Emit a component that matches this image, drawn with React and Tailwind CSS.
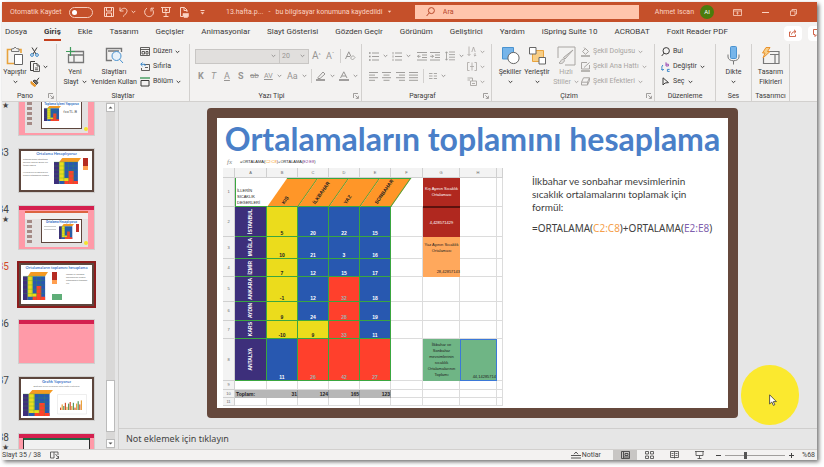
import React from "react";

const ui = "font-['Roboto','Noto_Sans',sans-serif]";

function Svg({ w, h, className = "", children }) {
  return (
    <svg
      width={w}
      height={h}
      viewBox={`0 0 ${w} ${h}`}
      fill="none"
      stroke="currentColor"
      strokeWidth="1"
      aria-hidden="true"
      className={`shrink-0 ${className}`}
    >
      {children}
    </svg>
  );
}

function Chevron({ className = "" }) {
  return (
    <Svg w={5} h={4} className={className}>
      <path d="M0.7 0.9 2.5 2.7 4.3 0.9" />
    </Svg>
  );
}

function Launcher() {
  return (
    <Svg w={6} h={6} className="text-[#8a8886]">
      <path d="M0.5 5V0.5H5M2.3 2.3 5.2 5.2M5.4 2.8V5.4H2.8" strokeWidth="0.8" />
    </Svg>
  );
}

/* ---------- title bar ---------- */

function TitleIcon({ label, className = "", children }) {
  return (
    <button type="button" aria-label={label} className={`flex shrink-0 items-center justify-center ${className}`}>
      {children}
    </button>
  );
}

function TitleBar() {
  return (
    <header className="flex h-5 shrink-0 items-center bg-[#c5502a] text-[7px] leading-none text-[#fbd3c3]">
      <label htmlFor="autosave" className="ml-2 w-[59px] shrink-0 whitespace-nowrap">
        Otomatik Kaydet
      </label>
      <span className="relative flex h-[11px] w-6 shrink-0 items-center">
        <input
          id="autosave"
          type="checkbox"
          role="switch"
          className="h-[11px] w-6 appearance-none rounded-full border border-[#f6cdbd]"
        />
        <span className="pointer-events-none absolute left-[3px] h-[5px] w-[5px] rounded-full bg-white" />
      </span>
      <TitleIcon label="Kaydet" className="ml-2 w-4">
        <Svg w={10} h={10}>
          <path d="M0.5 0.5H9.5V9.5H0.5ZM2.5 0.5V4H7.5V0.5M2.5 9.5V6H7.5V9.5" />
        </Svg>
      </TitleIcon>
      <TitleIcon label="Geri Al" className="ml-0.5 w-4 gap-[3px]">
        <Svg w={9} h={10}>
          <path d="M1 0.5V4H4.5M1 4C3 1 6 0.6 7.4 2.2 8.8 4 8 6 4 9.6" />
        </Svg>
        <Chevron />
      </TitleIcon>
      <TitleIcon label="Yinele" className="ml-1.5 w-4">
        <Svg w={10} h={11}>
          <path d="M3 1.2C0.8 2.4 0 5 1.2 7.2 2.6 9.8 6 10.4 8.2 8.4 10 6.6 9.8 3.6 7.6 1.6M7 4.5V1.2H10" />
        </Svg>
      </TitleIcon>
      <TitleIcon label="Baştan Başlat" className="ml-px w-4">
        <Svg w={10} h={10}>
          <path d="M0 0.5H10M1.5 0.5V5.5H8.5V0.5M5 5.5V9.5M2.5 9.5H7.5M4.3 1.8V4.2L6.3 3Z" />
        </Svg>
      </TitleIcon>
      <TitleIcon label="Yazdır" className="ml-0.5 w-4">
        <Svg w={10} h={11}>
          <path d="M4 9.5H1.5V0.5H5.5L8 3V5M5 0.5V3.5H8" />
          <path d="M4 6.5H9.5V9.5H4ZM5 9.5V10.5H8.5V9.5" fill="currentColor" strokeWidth="0.6" />
        </Svg>
      </TitleIcon>
      <TitleIcon label="Araç Çubuğunu Özelleştir" className="ml-1 w-3">
        <Svg w={5} h={5}>
          <path d="M0.5 0.5H4.5" />
          <path d="M0.6 2.2H4.4L2.5 4.4Z" fill="currentColor" stroke="none" />
        </Svg>
      </TitleIcon>
      <span className="ml-[18px] flex shrink-0 items-center whitespace-pre">
        13.hafta.p...&nbsp;&nbsp; - &nbsp;&nbsp;bu bilgisayar konumuna kaydedildi
        <Svg w={5} h={4} className="ml-1">
          <path d="M0.8 0.8H4.2L2.5 2.8Z" fill="currentColor" stroke="none" />
        </Svg>
      </span>
      <div className="ml-auto flex h-3.5 w-56 shrink items-center gap-2 bg-[#ffc5ac] pl-[11px] text-[#b8482a]">
        <Svg w={9} h={10}>
          <circle cx="5.4" cy="3.6" r="3" />
          <path d="M3.3 5.8 0.6 9" />
        </Svg>
        <input
          type="search"
          aria-label="Ara"
          placeholder="Ara"
          className="min-w-0 flex-1 bg-transparent outline-none placeholder:text-[#b8482a]"
        />
      </div>
      <span className="ml-4 shrink-0 whitespace-nowrap">Ahmet Iscan</span>
      <span className="ml-1.5 flex h-3.5 w-3.5 shrink-0 items-center justify-center rounded-full bg-[#4a7c0c] text-[6px] text-white">
        AI
      </span>
      <TitleIcon label="Şerit Görüntüleme" className="ml-[17px] w-3">
        <Svg w={9} h={7}>
          <path d="M0.5 0.5H8.5V6.5H0.5ZM0.5 2H8.5M4.5 5.6V3.2M3.4 4.2 4.5 3.2 5.6 4.2" strokeWidth="0.8" />
        </Svg>
      </TitleIcon>
      <TitleIcon label="Simge Durumuna Küçült" className="ml-4 w-3">
        <Svg w={7} h={3}>
          <path d="M0 1.5H7" />
        </Svg>
      </TitleIcon>
      <TitleIcon label="Önceki Boyut" className="ml-4 mr-[18px] w-3">
        <Svg w={7} h={7}>
          <path d="M0.5 2H5V6.5H0.5ZM2 2V0.5H6.5V5H5" strokeWidth="0.8" />
        </Svg>
      </TitleIcon>
    </header>
  );
}

/* ---------- tabs ---------- */

const tabs = [
  "Dosya",
  "Giriş",
  "Ekle",
  "Tasarım",
  "Geçişler",
  "Animasyonlar",
  "Slayt Gösterisi",
  "Gözden Geçir",
  "Görünüm",
  "Geliştirici",
  "Yardım",
  "iSpring Suite 10",
  "ACROBAT",
  "Foxit Reader PDF",
];

function Tabs() {
  return (
    <nav className="flex h-[22px] shrink-0 items-center overflow-hidden pl-[3px] text-[8px] leading-none text-[#3b3a39]">
      <div className="flex gap-[17px]">
        {tabs.map((t) => (
          <button
            key={t}
            type="button"
            className={
              t === "Giriş"
                ? "border-b-2 border-[#c43e1c] pt-[3px] pb-[3px] font-bold whitespace-nowrap"
                : "border-b-2 border-transparent pt-[3px] pb-[3px] whitespace-nowrap"
            }
          >
            {t}
          </button>
        ))}
      </div>
      <div className="ml-auto flex shrink-0 gap-1.5 text-[#c43e1c]">
        <button type="button" aria-label="Paylaş" className="flex h-[15px] w-[18px] items-center justify-center rounded-sm bg-white">
          <Svg w={8} h={8}>
            <path d="M2 3H0.5V7.5H6.5V5.5M2.5 5.5C2.8 3.5 4 2.6 6.5 2.6M5 0.8 7 2.6 5 4.4" strokeWidth="0.8" />
          </Svg>
        </button>
        <button type="button" aria-label="Açıklamalar" className="flex h-[15px] w-[9px] items-center justify-end overflow-hidden rounded-l-sm bg-white">
          <Svg w={4} h={8}>
            <path d="M4 0.5H0.5V5.5H2V7.5L4 5.5" strokeWidth="0.8" />
          </Svg>
        </button>
      </div>
    </nav>
  );
}

/* ---------- ribbon ---------- */

function Group({ label, launcher, width, children }) {
  return (
    <section aria-label={label} className={`flex shrink-0 flex-col border-r border-[#d2d0ce] ${width}`}>
      <div className="flex h-12 items-start">{children}</div>
      <div className="flex h-[10px] items-center">
        <span className="flex-1 text-center whitespace-nowrap">{label}</span>
        {launcher && (
          <button type="button" aria-label={`${label} ayarları`} className="mr-0.5">
            <Launcher />
          </button>
        )}
      </div>
    </section>
  );
}

function BigButton({ icon, line1, line2, chevron, chevronBelow, className = "", disabled }) {
  return (
    <button
      type="button"
      disabled={disabled}
      className={`flex shrink-0 flex-col items-center whitespace-nowrap leading-[10px] ${disabled ? "text-[#a8a5a2]" : ""} ${className}`}
    >
      <span className="flex h-[23px] items-center">{icon}</span>
      <span>{line1}</span>
      <span className="flex h-[10px] items-center gap-[3px]">
        {line2}
        {(chevron || chevronBelow) && <Chevron />}
      </span>
    </button>
  );
}

function SmallButton({ icon, label, chevron, disabled, aria }) {
  return (
    <button
      type="button"
      disabled={disabled}
      aria-label={aria}
      className={`flex h-[15px] items-center gap-[3px] whitespace-nowrap ${disabled ? "text-[#a8a5a2]" : ""}`}
    >
      {icon}
      {label}
      {chevron && <Chevron />}
    </button>
  );
}

function Tool({ label, width, chevron, children }) {
  return (
    <button
      type="button"
      disabled
      aria-label={label}
      className={`flex h-4 shrink-0 items-center gap-1 text-[#979593] ${width}`}
    >
      {children}
      {chevron && <Chevron />}
    </button>
  );
}

function Lines({ rows }) {
  return (
    <Svg w={9} h={9}>
      {rows.map(([a, b], i) => (
        <path key={i} d={`M${a} ${0.5 + i * 2.6}H${b}`} strokeWidth="0.9" />
      ))}
    </Svg>
  );
}

function Ribbon() {
  return (
    <div className="flex h-[58px] shrink-0 overflow-hidden border-b border-[#d2d0ce] text-[7px] leading-none text-[#3b3a39]">
      <Group label="Pano" launcher width="w-[55px]">
        <BigButton
          className="w-[26px]"
          line1="Yapıştır"
          chevronBelow
          icon={
            <Svg w={18} h={20}>
              <path d="M6 3.5H1.5V17.5H8M12 3.5H15V7" stroke="#e8a33d" strokeWidth="1.6" />
              <path d="M5.5 5.5V3L8 2.5 9 1 10.5 2.5 13 3V5.5Z" fill="#f3f2f1" stroke="#777" />
              <path d="M8.5 8.5H16.5V18.5H8.5Z" fill="#fff" stroke="#666" />
            </Svg>
          }
        />
        <div className="ml-0.5 flex flex-col">
          <SmallButton
            aria="Kes"
            icon={
              <Svg w={9} h={10}>
                <path d="M2 0.5 6 7M7 0.5 3 7" />
                <circle cx="2" cy="8" r="1.4" stroke="#3a87c9" />
                <circle cx="7" cy="8" r="1.4" stroke="#3a87c9" />
              </Svg>
            }
          />
          <SmallButton
            aria="Kopyala"
            chevron
            icon={
              <Svg w={10} h={11}>
                <path d="M3.5 9.5H0.5V0.5H5" />
                <path d="M3.5 2.5H7L9.5 5V10.5H3.5ZM7 2.5V5H9.5M5 7H8M5 8.7H8" strokeWidth="0.8" />
              </Svg>
            }
          />
          <SmallButton
            aria="Biçim Boyacısı"
            icon={
              <Svg w={10} h={10}>
                <path d="M1 4.5 6 8.5 4.5 9.5 1 6.5Z" fill="#f0a030" stroke="#e08a1c" />
                <path d="M3 4 6.5 7.5 8 5.5 5 3ZM6.5 4 9 0.8" fill="#777" />
              </Svg>
            }
          />
        </div>
      </Group>

      <Group label="Slaytlar" width="w-[133px]">
        <BigButton
          className="ml-0.5 w-8"
          line1="Yeni"
          line2="Slayt"
          chevron
          icon={
            <Svg w={19} h={17}>
              <path d="M4 4.5H17.5V15.5H2.5V7M2.5 8H17M8 8V15" stroke="#777" strokeWidth="1.3" />
              <path d="M4.5 0V9M0 4.5H9" stroke="#3f9b5c" strokeWidth="1.2" />
            </Svg>
          }
        />
        <BigButton
          className="w-[46px]"
          line1="Slaytları"
          line2="Yeniden Kullan"
          icon={
            <Svg w={19} h={17}>
              <path d="M7 13.5H1.5V1.5H16.5V5M3 4H14" stroke="#777" strokeWidth="1.4" />
              <circle cx="11.5" cy="9" r="4.5" fill="#e8f2fa" stroke="#4a93d0" />
              <path d="M14.5 12.2 18 16" stroke="#4a93d0" />
            </Svg>
          }
        />
        <div className="ml-[3px] flex flex-col">
          <SmallButton
            label="Düzen"
            chevron
            icon={
              <Svg w={10} h={9}>
                <path d="M0.5 0.5H9.5V8.5H0.5ZM0.5 2.5H9.5M2 4.5H4.5V7H2ZM6 4.5H8V7H6Z" strokeWidth="0.8" />
              </Svg>
            }
          />
          <SmallButton
            label="Sıfırla"
            icon={
              <Svg w={10} h={9}>
                <path d="M4 2.5H9.5V8.5H1.5V6M5 5.5H8" strokeWidth="0.8" />
                <path d="M2.5 0.5 0.7 2.3 2.5 4.1M1 2.3H5V4" stroke="#3a87c9" />
              </Svg>
            }
          />
          <SmallButton
            label="Bölüm"
            chevron
            icon={
              <Svg w={10} h={10}>
                <path d="M0 1H10" stroke="#3f9b5c" strokeWidth="1.4" />
                <path d="M1 3.5H9V9H1Z" />
              </Svg>
            }
          />
        </div>
      </Group>

      <Group label="Yazı Tipi" launcher width="w-[172px]">
        <div className="ml-[5px] flex flex-col">
          <div className="mt-1 flex h-4 items-center text-[#979593]">
            <span className="relative flex items-center">
              <select disabled aria-label="Yazı tipi" className="h-[15px] w-[85px] appearance-none border border-[#c8c6c4] bg-[#e1dfdd] opacity-100">
                <option> </option>
              </select>
              <Chevron className="absolute right-1" />
            </span>
            <span className="relative flex items-center">
              <select disabled aria-label="Yazı tipi boyutu" className="h-[15px] w-[29px] appearance-none border border-l-0 border-[#c8c6c4] bg-[#e1dfdd] pl-0.5 text-[7px] leading-none opacity-100">
                <option>20</option>
              </select>
              <Chevron className="absolute right-1" />
            </span>
            <Tool label="Yazı tipini büyüt" width="ml-[3px] w-[14px]">
              <span className="text-[10px]">A<sup className="text-[5px]">^</sup></span>
            </Tool>
            <Tool label="Yazı tipini küçült" width="w-[10px]">
              <span className="text-[9px]">A<sup className="text-[5px]">ˇ</sup></span>
            </Tool>
            <span className="mx-1 h-3.5 w-px bg-[#d2d0ce]" />
            <Tool label="Biçimlendirmeyi temizle" width="w-3">
              <Svg w={11} h={10}>
                <path d="M0.5 8 3.8 0.8 6 5.5M1.7 5.5H5" />
                <path d="M5.5 7 8 4.5 10 6.5 7.5 9Z" strokeWidth="0.8" />
              </Svg>
            </Tool>
          </div>
          <div className="mt-1 flex h-4 items-center text-[9px]">
            <Tool label="Kalın" width="ml-[3px] w-[13px]"><b>K</b></Tool>
            <Tool label="İtalik" width="w-[13px]"><i>T</i></Tool>
            <Tool label="Altı çizili" width="w-[14px]"><u>A</u></Tool>
            <Tool label="Gölge" width="w-3"><b>S</b></Tool>
            <Tool label="Üstü çizili" width="w-[14px]"><s className="text-[8px]">ab</s></Tool>
            <Tool label="Karakter aralığı" width="w-[23px]" chevron><span className="text-[7px] underline">AV</span></Tool>
            <Tool label="Büyük küçük harf" width="w-5" chevron>Aa</Tool>
            <span className="mx-1 h-3.5 w-px bg-[#d2d0ce]" />
            <Tool label="Vurgu rengi" width="w-[23px]" chevron>
              <Svg w={10} h={10}>
                <path d="M2 6.5 7 1 9 3 4 7.5H2Z" />
                <path d="M0 9H9" strokeWidth="1.8" />
              </Svg>
            </Tool>
            <Tool label="Yazı tipi rengi" width="w-5" chevron>
              <Svg w={10} h={10}>
                <path d="M1.5 7 4.8 0.8 8 7M2.8 5H7" />
                <path d="M0 9H10" strokeWidth="1.8" />
              </Svg>
            </Tool>
          </div>
        </div>
      </Group>

      <Group label="Paragraf" launcher width="w-[130px]">
        <div className="ml-[7px] flex flex-col">
          <div className="mt-1 flex h-4 items-center">
            <Tool label="Madde işaretleri" width="w-[23px]" chevron>
              <Svg w={10} h={9}>
                <path d="M0 1H1.6M0 4.5H1.6M0 8H1.6" strokeWidth="1.6" />
                <path d="M3 1H10M3 4.5H10M3 8H10" strokeWidth="0.9" />
              </Svg>
            </Tool>
            <Tool label="Numaralandırma" width="w-[25px]" chevron>
              <Svg w={10} h={9}>
                <path d="M1 0V2.4M1 3.4V5.6M1 6.8V9" strokeWidth="0.8" />
                <path d="M3 1H10M3 4.5H10M3 8H10" strokeWidth="0.9" />
              </Svg>
            </Tool>
            <Tool label="Girintiyi azalt" width="w-[13px]">
              <Svg w={10} h={9}>
                <path d="M0 0.5H10M5 3H10M5 5.5H10M0 8H10M3.6 4.3H0.6M2 2.8 0.5 4.3 2 5.8" strokeWidth="0.9" />
              </Svg>
            </Tool>
            <Tool label="Girintiyi artır" width="w-[15px]">
              <Svg w={10} h={9}>
                <path d="M0 0.5H10M5 3H10M5 5.5H10M0 8H10M0.2 4.3H3.4M2 2.8 3.5 4.3 2 5.8" strokeWidth="0.9" />
              </Svg>
            </Tool>
            <Tool label="Satır aralığı" width="w-[22px]" chevron>
              <Svg w={10} h={10}>
                <path d="M4 1H10M4 3.6H10M4 6.2H10M4 8.8H10M1.5 0.8V9.2M0.2 2.2 1.5 0.8 2.8 2.2M0.2 7.8 1.5 9.2 2.8 7.8" strokeWidth="0.8" />
              </Svg>
            </Tool>
          </div>
          <div className="mt-1 flex h-4 items-center">
            <Tool label="Sola hizala" width="w-[13px]"><Lines rows={[[0, 9], [0, 6], [0, 9], [0, 6]]} /></Tool>
            <Tool label="Ortala" width="w-[14px]"><Lines rows={[[0, 9], [1.5, 7.5], [0, 9], [1.5, 7.5]]} /></Tool>
            <Tool label="Sağa hizala" width="w-[13px]"><Lines rows={[[0, 9], [3, 9], [0, 9], [3, 9]]} /></Tool>
            <Tool label="İki yana yasla" width="w-[9px]"><Lines rows={[[0, 9], [0, 9], [0, 9], [0, 9]]} /></Tool>
            <span className="mx-[5px] h-3.5 w-px bg-[#d2d0ce]" />
            <Tool label="Sütunlar" width="w-5" chevron>
              <Svg w={8} h={6}>
                <path d="M0 0.5H3.5M0 3H3.5M0 5.5H3.5M4.8 0.5H8M4.8 3H8M4.8 5.5H8" strokeWidth="0.8" />
              </Svg>
            </Tool>
          </div>
        </div>
        <div className="flex flex-col">
          <SmallButton aria="Metin yönü" disabled chevron icon={
            <Svg w={10} h={11}>
              <path d="M2 0.5V9.5M0.5 8 2 9.5 3.5 8M4.8 6 6.5 1 8.2 6M8 7V10M6.8 9 8 10.2 9.2 9" strokeWidth="0.8" />
            </Svg>
          } />
          <SmallButton aria="Metni hizala" disabled chevron icon={
            <Svg w={10} h={9}>
              <path d="M2.5 0.5H0.5V8.5H2.5M7.5 0.5H9.5V8.5H7.5M5 0.5V8.5M3 4.5H7" strokeWidth="0.8" />
            </Svg>
          } />
          <SmallButton aria="SmartArt'a dönüştür" disabled chevron icon={
            <Svg w={10} h={9}>
              <path d="M0.5 1H5.5V4M0.5 3H3M3.5 4H9.5V8.5H3.5ZM5 6.5H8" strokeWidth="0.9" />
            </Svg>
          } />
        </div>
      </Group>

      <Group label="Çizim" launcher width="w-[163px]">
        <BigButton
          className="ml-[5px] w-[26px]"
          line1="Şekiller"
          chevronBelow
          icon={
            <Svg w={19} h={19}>
              <path d="M1.5 1.5H12.5V13H1.5Z" fill="#76b5ea" stroke="#4a93d0" />
              <circle cx="12.5" cy="12" r="5.6" fill="#fff" stroke="#666" />
            </Svg>
          }
        />
        <BigButton
          className="w-7"
          line1="Yerleştir"
          chevronBelow
          icon={
            <Svg w={19} h={19}>
              <path d="M4.5 4.5H15.5V15.5H4.5Z" fill="#f8ce86" stroke="#e8a33d" />
              <path d="M1.5 1.5H8V8H1.5ZM11 11.5H17.5V18H11Z" fill="#fff" stroke="#666" />
            </Svg>
          }
        />
        <BigButton
          className="w-[30px]"
          disabled
          line1="Hızlı"
          line2="Stiller"
          chevron
          icon={
            <Svg w={19} h={20}>
              <path d="M1 1H18V19H8M1 1V12" />
              <path d="M16 4 8 13 6.5 11.5ZM7 13C4 12.5 4 16 2 17 4 18.5 7.5 17 7.5 13.5" fill="#e1dfdd" />
            </Svg>
          }
        />
        <div className="flex flex-col">
          <SmallButton label="Şekil Dolgusu" disabled chevron icon={
            <Svg w={9} h={10}>
              <path d="M1.5 4.5 4.5 1.5 7.5 4.5 4.5 7.3ZM3 0.5 5 2.5" />
              <path d="M0 9H9" strokeWidth="1.6" />
            </Svg>
          } />
          <SmallButton label="Şekil Ana Hattı" disabled chevron icon={
            <Svg w={9} h={10}>
              <path d="M6 0.5H0.5V7H8.5V3M3 5.5 8.5 0.5" />
              <path d="M0 9H9" strokeWidth="1.6" />
            </Svg>
          } />
          <SmallButton label="Şekil Efektleri" disabled chevron icon={
            <Svg w={9} h={9}>
              <path d="M2.5 0.8H8.5L6.5 5.2H0.5ZM0.5 5.2V8H6.5L8.5 3.5V0.8M6.5 5.2V8" />
            </Svg>
          } />
        </div>
      </Group>

      <Group label="Düzenleme" width="w-[61px]">
        <div className="ml-[6px] flex flex-col">
          <SmallButton label="Bul" icon={
            <Svg w={9} h={10}>
              <circle cx="5.2" cy="3.8" r="3.2" />
              <path d="M3 6.2 0.7 9" />
            </Svg>
          } />
          <SmallButton label="Değiştir" chevron icon={
            <Svg w={9} h={10}>
              <path d="M2 3C0.5 4 0.5 6.5 1.5 8M0.3 7 1.6 8.4 2.8 7M8.6 7.4H6.4V9.4H8.6" stroke="#3a87c9" />
              <path d="M5 0.3V4H7.4V2.2H5" stroke="#9b4fb5" />
            </Svg>
          } />
          <SmallButton label="Seç" chevron icon={
            <Svg w={9} h={9}>
              <path d="M2 0.8V8L4 6 7.5 5.6Z" />
            </Svg>
          } />
        </div>
      </Group>

      <Group label="Ses" width="w-9">
        <BigButton
          className="w-full"
          line1="Dikte"
          chevronBelow
          icon={
            <Svg w={13} h={19}>
              <rect x="3.5" y="0.5" width="6" height="12" rx="1" fill="#76b5ea" stroke="#4a93d0" />
              <path d="M1 8.5V11C1 16 12 16 12 11V8.5M6.5 15V18.5" stroke="#777" />
            </Svg>
          }
        />
      </Group>

      <Group label="Tasarımcı" width="w-[38px]">
        <BigButton
          className="w-full"
          line1="Tasarım"
          line2="Fikirleri"
          icon={
            <Svg w={19} h={18}>
              <path d="M6 4.5H18V16.5H2.5V11M9 7.5H18M14 7.5V16" stroke="#777" strokeWidth="1.2" />
              <path d="M5 0.5H9L6.5 4.5H9L2 11 4 6H1.5Z" fill="#f8ce86" stroke="#e8912d" />
            </Svg>
          }
        />
      </Group>
    </div>
  );
}

/* ---------- slide thumbnails ---------- */

function MiniSheet({ w, h }) {
  return (
    <svg width={w} height={h} viewBox="0 0 26 26" preserveAspectRatio="none" aria-hidden="true" className="shrink-0">
      <path d="M5 4 8 0H26L23 4Z" fill="#f59a23" />
      <path d="M0 4H5V26H0Z" fill="#3d2f7b" />
      <path d="M5 4H23V26H5Z" fill="#2858b0" />
      <path d="M5 4H10V20H15V23H5Z" fill="#ebdc1c" />
      <path d="M14 13H19V23H23V26H10V23H14Z" fill="#ff402c" />
      <path d="M0 4H23M0 8H23M0 12H23M0 16H23M0 20H23M5 4V26M9.500 4V26M14 4V26M18.500 4V26" stroke="#3aa040" strokeWidth="0.3" />
    </svg>
  );
}

function MiniTitle({ children }) {
  return (
    <p className="overflow-hidden text-center font-['Lato',sans-serif] text-[4px] leading-[6px] font-bold whitespace-nowrap text-[#3f78c8]">
      {children}
    </p>
  );
}

function FramedMini({ children }) {
  return <div className="h-full w-full overflow-hidden border-2 border-[#5d463d] bg-white">{children}</div>;
}

function RecordingMini({ title, note, banner }) {
  return (
    <div className="flex h-full w-full flex-col bg-[#ff9aa8]">
      {banner && <div className="h-1 shrink-0 bg-[#d4204f]" />}
      <div className="mx-1.5 mt-px mb-0.5 flex min-h-0 flex-1 flex-col bg-[#e3e1e1]">
        <div className="h-0.5 bg-[#dc6440]" />
        <div className="h-1.5 bg-[#f1efee]" />
        <div className="flex min-h-0 flex-1">
          <div className="flex w-4 shrink-0 flex-col gap-[2px] pt-px pl-0.5">
            {[0, 1, 2, 3, 4].map((i) => (
              <span key={i} className="h-[3px] w-[5px] shrink-0 bg-[#a58a86]" />
            ))}
          </div>
          <div className="mb-1 flex-1 overflow-hidden border border-[#5d463d] bg-white">
            <p className="text-center text-[3px] leading-[4px] font-bold whitespace-nowrap text-[#3f78c8]">{title}</p>
            <div className="flex justify-between pl-0.5">
              {note ? (
                <>
                  <MiniSheet w={17} h={15} />
                  <span className="pt-1 pr-1 text-[4px] leading-none text-[#555]">{note}</span>
                </>
              ) : (
                <>
                  <span className="mt-0.5 h-1 w-3 border-y border-[#ccc]" />
                  <span className="flex gap-0.5 pr-0.5">
                    <MiniSheet w={15} h={15} />
                    <span className="h-2 w-[3px] bg-[#c0302a]" />
                  </span>
                </>
              )}
            </div>
          </div>
          <span className="ml-0.5 mb-0.5 h-1 w-1 self-end rounded-full bg-[#f5e12c]" />
        </div>
      </div>
    </div>
  );
}

function RedKey({ className = "" }) {
  return (
    <span className={`flex w-[5px] flex-col ${className}`}>
      <span className="h-2 bg-[#b52b22]" />
      <span className="h-1 bg-[#ff9f50]" />
    </span>
  );
}

const miniBars = [3, 7, 5, 9, 4, 8, 10, 5, 9, 3, 8, 11, 7, 12];
const miniColors = ["fill-[#d04f2c]", "fill-[#e9a13b]", "fill-[#5a9a5a]"];

const slides = [
  { id: 32, no: "", star: true, view: <RecordingMini title="Toplama İşlemi Yapıyoruz" note="fx=TL.B" /> },
  {
    id: 33,
    no: "33",
    view: (
      <FramedMini>
        <MiniTitle>Ortalama Hesaplıyoruz</MiniTitle>
        <div className="flex justify-between pt-px pr-1 pl-0.5">
          <div className="w-7 text-[2px] leading-[3px] text-[#666]">
            <p>Ortalama almak istediğimiz hücreleri seçeriz. Bunun için formül yazarız</p>
            <p className="mt-1">Kış aylarının ve yaz aylarının sıcaklık ortalamasını hesapla</p>
          </div>
          <MiniSheet w={27} h={26} />
          <RedKey />
        </div>
      </FramedMini>
    ),
  },
  { id: 34, no: "34", star: true, view: <RecordingMini banner title="Ortalama Hesaplıyoruz" /> },
  {
    id: 35,
    no: "35",
    selected: true,
    view: (
      <FramedMini>
        <MiniTitle>Ortalamaların toplamını hesaplama</MiniTitle>
        <div className="flex gap-1 pt-px pl-0.5">
          <MiniSheet w={25} h={28} />
          <span className="flex flex-col justify-between">
            <RedKey />
            <span className="h-[6px] w-[10px] bg-[#5fae78]" />
          </span>
          <p className="w-6 pt-px text-[2px] leading-[3px] text-[#666]">
            İlkbahar ve sonbahar mevsimlerinin sıcaklık ortalamalarını toplamak için
          </p>
        </div>
      </FramedMini>
    ),
  },
  {
    id: 36,
    no: "36",
    view: (
      <div className="h-full w-full bg-[#ff9aa8]">
        <div className="h-1 bg-[#d4204f]" />
      </div>
    ),
  },
  {
    id: 37,
    no: "37",
    view: (
      <FramedMini>
        <MiniTitle>Grafik Yapıyoruz</MiniTitle>
        <p className="text-center text-[2px] leading-[3px] whitespace-nowrap text-[#777]">
          Aşağıdaki verileri kullanarak sütun grafik oluşturalım
        </p>
        <div className="flex gap-1 pt-0.5 pl-0.5">
          <MiniSheet w={30} h={26} />
          <svg width="30" height="22" viewBox="0 0 30 22" aria-hidden="true" className="mt-1">
            <path d="M0.500 0.500H29.500V20H0.500Z" fill="#fff" stroke="#ddd" strokeWidth="0.5" />
            {miniBars.map((b, i) => (
              <rect key={i} x={3 + i * 1.6} y={16 - b * 0.8} width="1.2" height={b * 0.8} className={miniColors[i % 3]} />
            ))}
          </svg>
        </div>
      </FramedMini>
    ),
  },
  {
    id: 38,
    no: "38",
    star: true,
    view: (
      <div className="flex h-full w-full flex-col bg-[#ff9aa8]">
        <div className="h-1 shrink-0 bg-[#d4204f]" />
        <div className="mx-1 flex-1 border border-t-2 border-[#2b2b2b] border-t-[#1e6b43] bg-[#f1f1f1]" />
      </div>
    ),
  },
];

function SlidePanel() {
  return (
    <aside className="flex w-[117px] shrink-0 overflow-hidden border-r border-[#d0cfce]">
      <ol className="-mt-[10px] flex w-[104px] flex-col gap-3.5">
        {slides.map((s) => (
          <li key={s.id} className="flex h-[43px] shrink-0">
            <div className="flex w-[7px] shrink-0 flex-col items-end">
              <span className={`h-2 text-[10px] leading-[8px] ${s.selected ? "text-[#d24726]" : "text-[#444]"}`}>{s.no}</span>
              {s.star && <span className="text-[8px] leading-[12px] text-[#444]">★</span>}
            </div>
            <button
              type="button"
              aria-label={`Slayt ${s.id}`}
              className={`ml-[10px] h-[43px] w-[75px] text-left ${
                s.selected ? "outline-2 outline-[#8c1d1d]" : "outline-1 outline-[#d0cfce]"
              }`}
            >
              {s.view}
            </button>
          </li>
        ))}
      </ol>
      <div className="flex w-[9px] flex-col bg-[#d9d8d7] py-px">
        <button type="button" aria-label="Yukarı kaydır" className="flex h-[9px] items-center justify-center border border-[#bbb] bg-white">
          <Svg w={5} h={3}>
            <path d="M0.500 2.500H4.500L2.500 0.500Z" fill="#555" stroke="none" />
          </Svg>
        </button>
        <div className="mt-auto mb-[7px] h-[52px] border border-[#bbb] bg-white" />
        <button type="button" aria-label="Aşağı kaydır" className="flex h-[9px] items-center justify-center border border-[#bbb] bg-white">
          <Svg w={5} h={3}>
            <path d="M0.500 0.500H4.500L2.500 2.500Z" fill="#555" stroke="none" />
          </Svg>
        </button>
      </div>
    </aside>
  );
}

/* ---------- slide content ---------- */

const Y = "bg-[#ebdc1c] text-[#222]";
const B = "bg-[#2858b0] text-white";
const R = "bg-[#ff402c] text-[#9fb0b0]";

const rows = [
  { n: 2, h: "h-[30px]", city: "İSTANBUL", cells: [["5", Y], ["20", B], ["22", B], ["15", B]] },
  { n: 3, h: "h-[22px]", city: "MUĞLA", cells: [["10", Y], ["21", B], ["3", B], ["16", B]] },
  { n: 4, h: "h-[18px]", city: "İZMİR", cells: [["7", Y], ["12", B], ["15", B], ["17", B]] },
  { n: 5, h: "h-[25px]", city: "ANKARA", cells: [["-1", Y], ["12", B], ["32", R], ["18", B]] },
  { n: 6, h: "h-[19px]", city: "AYDIN", cells: [["9", Y], ["24", B], ["28", R], ["19", B]] },
  { n: 7, h: "h-[18px]", city: "KARS", cells: [["-10", Y], ["9", Y], ["33", R], ["11", B]] },
  { n: 8, h: "h-[42px]", city: "ANTALYA", cells: [["11", B], ["26", R], ["42", R], ["27", R]] },
];

const side = {
  2: ["4,428571429", "bg-[#b0281f] text-white align-middle text-center border-t border-t-[#5c120e]"],
  3: ["Yaz Ayının Sıcaklık Ortalaması", "bg-[#ffa85c] text-[#222] align-middle text-center"],
  4: ["28,42857143", "bg-[#ffa85c] text-[#222] align-bottom text-right pb-0.5"],
  8: ["İlkbahar ve Sonbahar mevsimlerinin sıcaklık Ortalamalarının Toplamı", "bg-[#6fb585] text-[#222] align-middle text-center"],
};

const grid = "border-r border-b border-[#dcdcdc] p-0";
const rowHead = "border-r border-b border-[#d0d0d0] bg-[#f3f3f3] p-0 text-center align-middle font-normal text-[#666]";
const green = "border-r border-b border-[#3aa640] p-0";

function Sheet() {
  return (
    <table className="w-[280px] table-fixed border-separate border-spacing-0 font-['Liberation_Sans_Narrow','Liberation_Sans',sans-serif] text-[4px] leading-[6px]">
      <colgroup>
        <col className="w-3" />
        <col className="w-8" />
        <col className="w-[31px]" />
        <col className="w-[31px]" />
        <col className="w-[31px]" />
        <col className="w-[31px]" />
        <col className="w-8" />
        <col className="w-[37px]" />
        <col className="w-[37px]" />
        <col className="w-[6px]" />
      </colgroup>
      <thead>
        <tr className="h-[10px]">
          {["", "A", "B", "C", "D", "E", "F", "G", "H", ""].map((c, i) => (
            <th key={i} scope="col" className={`${rowHead} ${c === "H" ? "bg-[#cfcfcf]" : ""}`}>
              {c}
            </th>
          ))}
        </tr>
      </thead>
      <tbody>
        <tr className="h-[29px]">
          <th scope="row" className={rowHead}>1</th>
          <td className="border-b border-l border-[#3aa640] p-0 pl-px align-bottom text-[#222]">
            İLLERİN
            <br />
            SICAKLIK
            <br />
            DEĞERLERİ
          </td>
          {["KIŞ", "İLKBAHAR", "YAZ", "SONBAHAR"].map((s) => (
            <th key={s} scope="col" className="relative p-0 font-bold text-[#222]">
              <span className="absolute inset-0 origin-bottom -skew-x-[35deg] border border-l-0 border-[#3aa640] bg-[#ff9628]" />
              <span className="absolute bottom-0.5 left-[18px] origin-bottom-left -rotate-[55deg] text-[5px] leading-none">{s}</span>
            </th>
          ))}
          <td className="border-b border-[#dcdcdc] p-0" />
          <td className="border-b border-[#5c120e] bg-[#b0281f] p-0 text-center align-middle text-white">
            Kış Ayının Sıcaklık Ortalaması
          </td>
          <td className={grid} />
          <td className={grid} />
        </tr>
        {rows.map((r) => (
          <tr key={r.n} className={r.h}>
            <th scope="row" className={`${rowHead} ${r.n === 8 ? "bg-[#cfcfcf]" : ""}`}>{r.n}</th>
            <th scope="row" className={`${green} bg-[#3d2f7b] text-white`}>
              <div className="flex h-full items-center justify-center">
                <span className="rotate-180 text-[5px] leading-none [writing-mode:vertical-rl]">{r.city}</span>
              </div>
            </th>
            {r.cells.map(([v, c], i) => (
              <td key={i} className={`${green} ${c} text-center align-bottom text-[5px] font-bold`}>
                {v}
              </td>
            ))}
            <td className={grid} />
            <td className={`${side[r.n] ? "p-0 " + side[r.n][1] : grid}`}>{side[r.n] ? side[r.n][0] : null}</td>
            <td className={r.n === 8 ? "border border-[#3b78d8] bg-[#6fb585] p-0 text-right align-bottom text-[#222]" : grid}>
              {r.n === 8 ? "44,14285714" : null}
            </td>
            <td className={grid} />
          </tr>
        ))}
        <tr className="h-[9px]">
          <th scope="row" className={rowHead}>9</th>
          {[0, 1, 2, 3, 4, 5, 6, 7, 8].map((i) => (
            <td key={i} className={grid} />
          ))}
        </tr>
        <tr className="h-2">
          <th scope="row" className={rowHead}>10</th>
          <td className="bg-[#b7b7b7] p-0 pl-px text-[5px] font-bold text-[#222]">Toplam:</td>
          {["31", "124", "165", "123"].map((v) => (
            <td key={v} className="border-r border-[#999] bg-[#b7b7b7] p-0 text-right text-[5px] font-bold text-[#222]">
              {v}
            </td>
          ))}
          {[0, 1, 2, 3].map((i) => (
            <td key={i} className={grid} />
          ))}
        </tr>
        <tr className="h-2">
          <th scope="row" className={rowHead}>11</th>
          {[0, 1, 2, 3, 4, 5, 6, 7, 8].map((i) => (
            <td key={i} className={grid} />
          ))}
        </tr>
      </tbody>
    </table>
  );
}

function Slide() {
  return (
    <article className="h-[310px] w-[531px] shrink-0 rounded-[4px] border-[10px] border-[#65483c] bg-white">
      <h1 className="flex h-[38px] items-center justify-center pt-1 font-['Lato',sans-serif] text-[32px] leading-none font-bold whitespace-nowrap text-[#4a7fc8]">
        Ortalamaların toplamını hesaplama
      </h1>
      <div className="flex pl-[6px]">
        <div className="shrink-0">
          <p className="flex h-3 items-center gap-2 pl-1 font-['Liberation_Sans',sans-serif] text-[4px] leading-none text-[#222]">
            <i className="font-['Liberation_Serif',serif] text-[7px] text-[#888]">fx</i>
            <span>
              =ORTALAMA(<span className="text-[#f7981d]">C2:C8</span>)+ORTALAMA(<span className="text-[#7e3794]">E2:E8</span>)
            </span>
          </p>
          <Sheet />
        </div>
        <div className="ml-[29px] pt-[19px] text-[#404040]">
          <p className="font-['Lato',sans-serif] text-[10px] leading-[13px] whitespace-nowrap">
            İlkbahar ve sonbahar mevsimlerinin
            <br />
            sıcaklık ortalamalarını toplamak için
            <br />
            formül:
          </p>
          <p className="mt-2 font-['Noto_Sans',sans-serif] text-[10px] leading-[13px] whitespace-nowrap">
            =ORTALAMA(<span className="text-[#f5a04a]">C2:C8</span>)+ORTALAMA(<span className="text-[#7f5fae]">E2:E8</span>)
          </p>
        </div>
      </div>
    </article>
  );
}

/* ---------- status bar ---------- */

function StatusBar() {
  return (
    <footer className="flex h-[11px] shrink-0 items-center border-t border-[#d2d0ce] bg-[#f3f2f1] text-[7px] leading-none text-[#444]">
      <span className="w-12 shrink-0 whitespace-nowrap">Slayt 35 / 38</span>
      <button type="button" aria-label="Yazım denetimi">
        <Svg w={9} h={8}>
          <path d="M4 1H0.500V7H4M4 1V7M4 1H8V4M5.500 3 8.500 7M8.500 5V7.500H6" strokeWidth="0.8" />
        </Svg>
      </button>
      <button type="button" className="ml-auto flex items-center gap-px">
        <Svg w={10} h={8}>
          <path d="M0 4.500H10M0 7H10M3 3.200 5 1 7 3.200" strokeWidth="0.9" />
        </Svg>
        Notlar
      </button>
      <button type="button" aria-label="Normal" className="ml-3 flex h-[10px] w-6 items-center justify-center bg-[#c8c6c4]">
        <Svg w={9} h={8}>
          <path d="M0.500 0.500H8.500V7.500H0.500ZM2.500 0.500V7.500M4 2.500H7V4.500H4ZM2.500 6H8" strokeWidth="0.9" />
        </Svg>
      </button>
      <button type="button" aria-label="Slayt sıralayıcısı" className="ml-2">
        <Svg w={9} h={8}>
          <path d="M0.500 0.500H3.500V3H0.500ZM5.500 0.500H8.500V3H5.500ZM0.500 5H3.500V7.500H0.500ZM5.500 5H8.500V7.500H5.500Z" strokeWidth="0.8" />
        </Svg>
      </button>
      <button type="button" aria-label="Okuma görünümü" className="ml-4">
        <Svg w={9} h={8}>
          <path d="M0.500 0.500H8.500V6.500H0.500ZM4.500 0.500V7.500M1.500 2.500H3.500M1.500 4.500H3.500M5.500 2.500H7.500M5.500 4.500H7.500" strokeWidth="0.8" />
        </Svg>
      </button>
      <button type="button" aria-label="Slayt gösterisi" className="ml-4">
        <Svg w={9} h={8}>
          <path d="M0 0.500H9M1 0.500V4.500H8V0.500M4.500 4.500V7.500M2.500 7.500H6.500" strokeWidth="0.8" />
        </Svg>
      </button>
      <button type="button" aria-label="Uzaklaştır" className="ml-3">
        <Svg w={5} h={5}>
          <path d="M0 2.500H5" />
        </Svg>
      </button>
      <input
        type="range"
        aria-label="Yakınlaştırma"
        min="0"
        max="100"
        defaultValue="33"
        className="mx-1 h-2 w-[60px] appearance-none bg-[linear-gradient(#a19f9d,#a19f9d)] bg-[length:100%_1px] bg-center bg-no-repeat [&::-webkit-slider-thumb]:h-[7px] [&::-webkit-slider-thumb]:w-[3px] [&::-webkit-slider-thumb]:appearance-none [&::-webkit-slider-thumb]:bg-[#555]"
      />
      <button type="button" aria-label="Yakınlaştır">
        <Svg w={5} h={5}>
          <path d="M0 2.500H5M2.500 0V5" />
        </Svg>
      </button>
      <span className="mr-0.5 ml-2">%68</span>
    </footer>
  );
}

function PointerHighlight() {
  return (
    <div className="pointer-events-none absolute right-[18px] bottom-[35px] flex h-[60px] w-[58px] items-center justify-center rounded-full bg-[#fbe92f] pt-2.5 pl-1.5">
      <Svg w={8} h={12}>
        <path d="M0.600 0.800V10L2.800 8 4.400 11.400 5.800 10.700 4.300 7.600H7.400Z" fill="#fff" stroke="#333" strokeWidth="0.8" />
      </Svg>
    </div>
  );
}

export default function App() {
  return (
    <div className={`h-screen overflow-hidden bg-white pt-0.5 pr-[7px] pb-[7px] pl-0.5 ${ui}`}>
      <div className="relative flex h-full flex-col bg-[#f3f2f1] shadow-[2px_2px_4px_rgba(0,0,0,0.55)]">
        <TitleBar />
        <Tabs />
        <Ribbon />
        <main className="flex min-h-0 flex-1 bg-[#e6e6e6]">
          <SlidePanel />
          <div className="flex min-w-0 flex-1 flex-col">
            <div className="flex min-h-0 flex-1 justify-center overflow-hidden pt-[6px] pl-[9px]">
              <Slide />
            </div>
            <textarea
              aria-label="Notlar"
              placeholder="Not eklemek için tıklayın"
              className="h-[21px] shrink-0 resize-none border-t border-[#cfcecd] px-[7px] py-1 font-['Noto_Sans',sans-serif] text-[9px] leading-3 outline-none placeholder:text-[#444]"
            />
          </div>
        </main>
        <StatusBar />
        <PointerHighlight />
      </div>
    </div>
  );
}
